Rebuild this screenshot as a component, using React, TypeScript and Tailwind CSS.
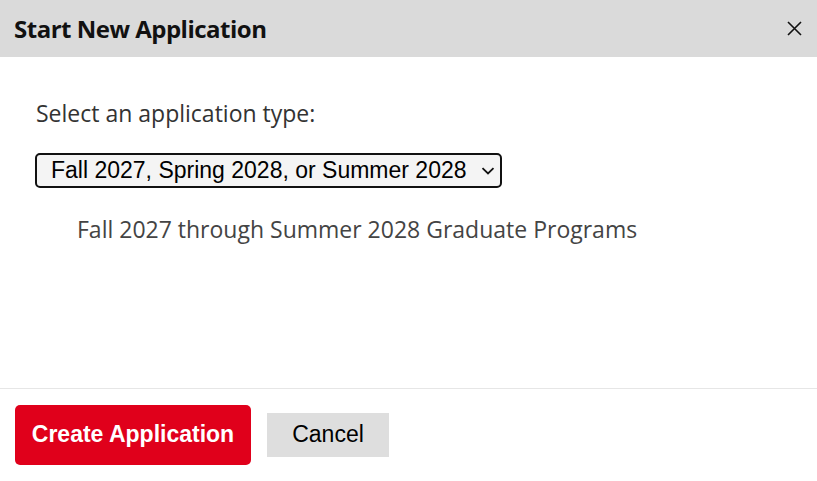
import React from "react";

export default function App() {
  return (
    <div className="w-[817px] h-[481px] bg-white flex flex-col overflow-hidden" style={{ fontFamily: '"Open Sans", sans-serif' }}>
      <div className="h-[57px] shrink-0 bg-[#dadada] flex items-center justify-between pl-[14px] pr-[15px]">
        <h1 className="text-[24px] font-bold text-[#111] tracking-[-0.5px]">Start New Application</h1>
        <button className="w-[16px] h-[16px] flex items-center justify-center text-black" aria-label="Close">
          <svg width="15" height="15" viewBox="0 0 15 15" fill="none" stroke="#111" strokeWidth="1.6">
            <path d="M1 1 L14 14 M14 1 L1 14" />
          </svg>
        </button>
      </div>
      <div className="flex-1 px-[35px] pt-[40px]">
        <p className="text-[23px] text-[#333] leading-[32px] pl-[1px]">Select an application type:</p>
        <div className="mt-[24px]">
          <div className="w-[467px] h-[35px] border-2 border-[#111] rounded-[5px] bg-[#f4f4f4] flex items-center justify-between pl-[14px] pr-[5px]">
            <span className="text-[23px] text-black leading-none" style={{ fontFamily: '"Liberation Sans", Arial, sans-serif' }}>Fall 2027, Spring 2028, or Summer 2028</span>
            <svg width="14" height="8" viewBox="0 0 14 8" fill="none" stroke="#111" strokeWidth="1.8">
              <path d="M1.5 1.2 L7 6.5 L12.5 1.2" />
            </svg>
          </div>
        </div>
        <p className="mt-[25px] pl-[42px] text-[23px] text-[#444] leading-[32px]">Fall 2027 through Summer 2028 Graduate Programs</p>
      </div>
      <div className="h-[93px] shrink-0 border-t border-[#e6e6e6] flex items-center gap-[16px] pl-[15px] pb-[1px]">
        <button className="w-[236px] h-[60px] bg-[#e0001b] rounded-[5px] text-white text-[23px] font-bold" style={{ fontFamily: '"Liberation Sans", Arial, sans-serif' }}>Create Application</button>
        <button className="w-[122px] h-[44px] bg-[#dedede] text-black text-[23px]" style={{ fontFamily: '"Liberation Sans", Arial, sans-serif' }}>Cancel</button>
      </div>
    </div>
  );
}
